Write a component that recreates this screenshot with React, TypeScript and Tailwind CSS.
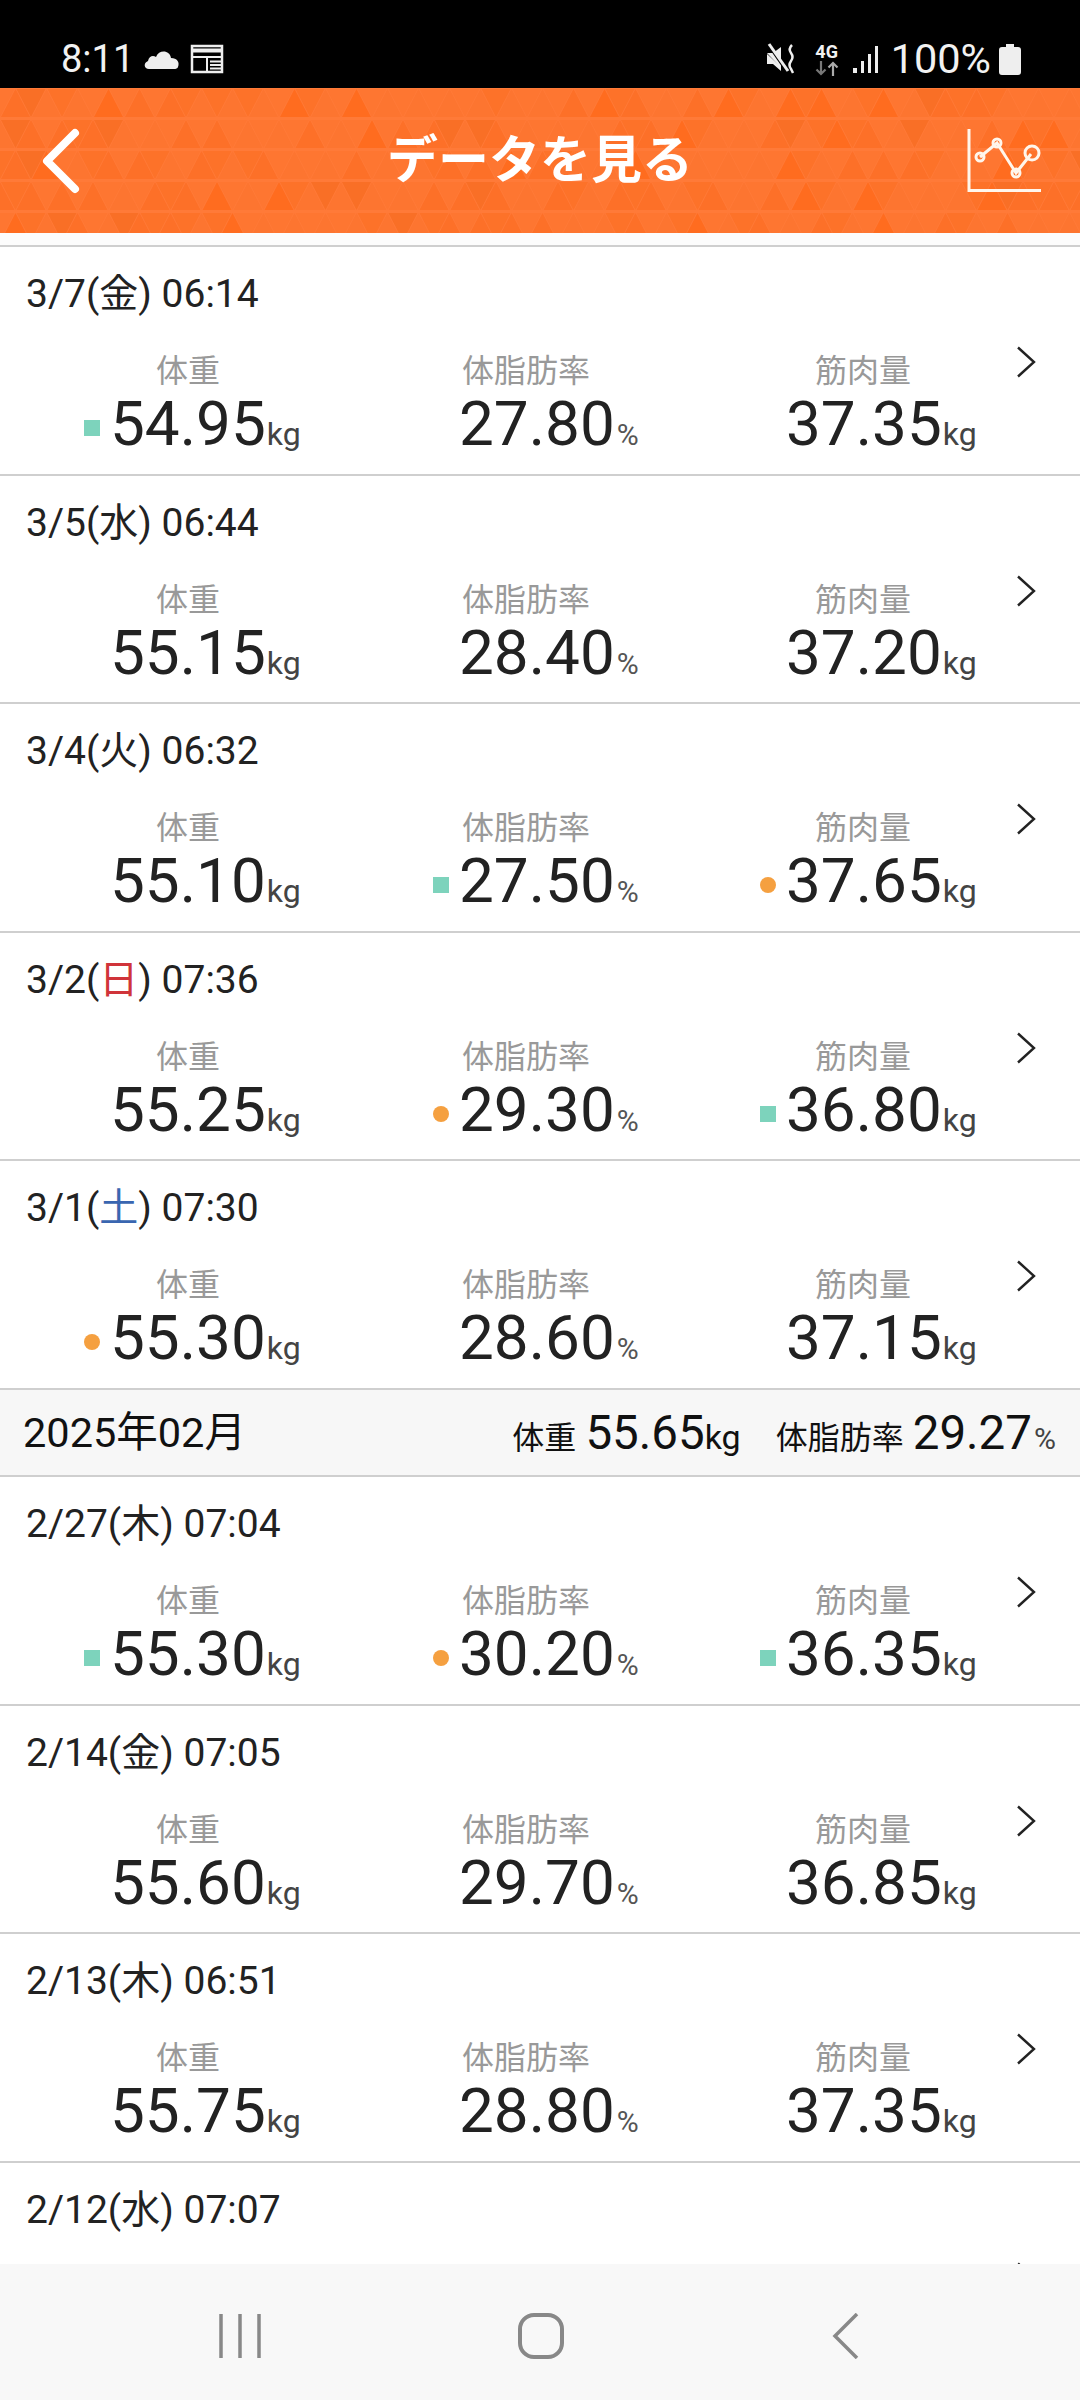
import { useMemo } from "react";

type Mark = "square" | "dot" | null;

type Entry = {
  date: string;
  day: string;
  time: string;
  weight?: string;
  fat?: string;
  muscle?: string;
  marks?: [Mark, Mark, Mark];
};

const marchRows: Entry[] = [
  { date: "3/7", day: "金", time: "06:14", weight: "54.95", fat: "27.80", muscle: "37.35", marks: ["square", null, null] },
  { date: "3/5", day: "水", time: "06:44", weight: "55.15", fat: "28.40", muscle: "37.20" },
  { date: "3/4", day: "火", time: "06:32", weight: "55.10", fat: "27.50", muscle: "37.65", marks: [null, "square", "dot"] },
  { date: "3/2", day: "日", time: "07:36", weight: "55.25", fat: "29.30", muscle: "36.80", marks: [null, "dot", "square"] },
  { date: "3/1", day: "土", time: "07:30", weight: "55.30", fat: "28.60", muscle: "37.15", marks: ["dot", null, null] },
];

// the last row runs under the nav bar, only its date is on screen
const febRows: Entry[] = [
  { date: "2/27", day: "木", time: "07:04", weight: "55.30", fat: "30.20", muscle: "36.35", marks: ["square", "dot", "square"] },
  { date: "2/14", day: "金", time: "07:05", weight: "55.60", fat: "29.70", muscle: "36.85" },
  { date: "2/13", day: "木", time: "06:51", weight: "55.75", fat: "28.80", muscle: "37.35" },
  { date: "2/12", day: "水", time: "07:07" },
];

function Marker({ kind }: { kind: Mark }) {
  if (kind === "square") return <span className="absolute left-[-26px] top-[27px] h-4 w-4 bg-[#7dd3bc]" />;
  if (kind === "dot") return <span className="absolute left-[-26px] top-[27px] h-4 w-4 rounded-full bg-[#f5a040]" />;
  return null;
}

function Row({ entry }: { entry: Entry }) {
  const marks = entry.marks ?? [null, null, null];
  const dayColor = entry.day === "日" ? "text-[#d0343a]" : entry.day === "土" ? "text-[#3a66b0]" : "";
  return (
    <div className="relative h-[228.6px] shrink-0 border-b-2 border-[#cfcfcf] bg-white">
      <div className="pl-[26px] pt-[25px] text-[39px] leading-[44px] text-[#222]">
        {entry.date}(<span className={dayColor}>{entry.day}</span>) {entry.time}
      </div>
      {entry.weight && entry.fat && entry.muscle && (
        <div className="mt-[35px] grid grid-cols-[349px_327px_1fr] pl-[110px]">
          <Cell label="体重" labelClass="ml-[46px]" value={entry.weight} unit="kg" mark={marks[0]} />
          <Cell label="体脂肪率" labelClass="ml-[3px]" value={entry.fat} unit="%" mark={marks[1]} />
          <Cell label="筋肉量" labelClass="ml-[29px]" value={entry.muscle} unit="kg" mark={marks[2]} />
        </div>
      )}
      <svg className="absolute right-[44px] top-[99px]" width="20" height="32" viewBox="0 0 20 32" fill="none">
        <path d="M2 1.5 L18 16 L2 30.5" stroke="#222" strokeWidth="2.4" />
      </svg>
    </div>
  );
}

function Cell({ label, labelClass, value, unit, mark }: { label: string; labelClass: string; value: string; unit: string; mark: Mark }) {
  return (
    <div>
      <div className={`text-[32px] leading-[40px] text-[#999] ${labelClass}`}>{label}</div>
      <div className="relative mt-[2px] flex items-baseline leading-[62px] text-[#222]">
        <Marker kind={mark} />
        <span className="text-[62px]">{value}</span>
        <span className={unit === "%" ? "ml-[2px] text-[30px] text-[#555]" : "ml-[1px] text-[32px] text-[#444]"}>{unit}</span>
      </div>
    </div>
  );
}

function MonthBar() {
  return (
    <div className="flex h-[87px] shrink-0 items-center justify-between border-b-2 border-[#cfcfcf] bg-[#f7f7f7] pl-[23px] pr-[24px] text-[#111]">
      <span className="mt-[2px] text-[41.500px]">2025年02月</span>
      <div className="mt-[2px] flex items-baseline">
        <span className="text-[32px]">体重</span>
        <span className="ml-[9px] text-[47.500px]">55.65</span>
        <span className="text-[34px]">kg</span>
        <span className="ml-[35px] text-[32px]">体脂肪率</span>
        <span className="ml-[9px] text-[47.500px]">29.27</span>
        <span className="ml-[2px] text-[30px] text-[#444]">%</span>
      </div>
    </div>
  );
}

// faint triangle texture of the app bar
function HeaderTexture() {
  const tris = useMemo(() => {
    const out: { d: string; fill: string }[] = [];
    let seed = 17;
    const next = () => {
      seed = (seed * 1103515245 + 12345) & 0x7fffffff;
      return seed / 0x7fffffff;
    };
    const w = 31;
    const h = 31;
    for (let r = 0; r < 5; r++) {
      const y = r * h - 1;
      for (let c = -1; c < 37; c++) {
        const x = c * w + (r % 2 ? w / 2 : 0);
        const n = next();
        const up = n < 0.18 ? "#ff6c1f" : n < 0.5 ? "#fd7028" : "#fd7530";
        out.push({ d: `M${x + 1} ${y + h - 1} L${x + w / 2} ${y + 2} L${x + w - 1} ${y + h - 1} Z`, fill: up });
        const m = next();
        const down = m < 0.1 ? "#f96f26" : m < 0.4 ? "#fd7229" : "#fe7631";
        out.push({ d: `M${x + w / 2 + 1} ${y + 2} L${x + w + w / 2 - 1} ${y + 2} L${x + w} ${y + h - 1} Z`, fill: down });
      }
    }
    return out;
  }, []);
  return (
    <svg className="absolute inset-0" width="1080" height="145" viewBox="0 0 1080 145">
      {tris.map((t, i) => (
        <path key={i} d={t.d} fill={t.fill} />
      ))}
    </svg>
  );
}

function StatusBar() {
  return (
    <div className="flex h-[88px] shrink-0 items-center bg-black pl-[61px] pr-[59px] pt-[30px] text-[#f2f2f2]">
      <span className="text-[38px] leading-none">8:11</span>
      <svg className="ml-[8px]" width="38" height="24" viewBox="0 0 38 24" fill="#eee">
        <path d="M7 22 C2 22 1 16 6 14 C7 9 11 8 14 10 C17 2 28 3 29 11 C35 11 38 15 36 20 C35.500 21.500 34 22 32 22 Z" />
      </svg>
      <svg className="ml-[10px]" width="34" height="30" viewBox="0 0 34 30" fill="none" stroke="#eee">
        <path d="M2 2 H32 V28 H2 Z" strokeWidth="2.500" />
        <path d="M2 6.500 H32" strokeWidth="4" />
        <path d="M2 13 H32 M17 13 V28" strokeWidth="2" />
        <path d="M20 17.500 H31 M20 21 H31 M20 24.500 H31" strokeWidth="1.800" />
      </svg>
      <div className="ml-auto flex items-center">
        <svg width="30" height="32" viewBox="0 0 30 32" fill="#eee">
          <path d="M1 10 H7 L15 4 V25 Z" />
          <path d="M1 11 V21 H7 L15 28 V24 Z" />
          <path d="M2 2 L20 28" stroke="#000" strokeWidth="2" />
          <path d="M3 1 L22 28" stroke="#eee" strokeWidth="3" />
          <path d="M26 2 Q22 6 25 10 Q28 14 25 18 Q22 22 25 26 L27 30" stroke="#eee" strokeWidth="2.500" fill="none" />
        </svg>
        <div className="ml-[18px] flex w-[26px] flex-col items-center">
          <span className="text-[18px] font-bold leading-[18px]">4G</span>
          <svg width="24" height="15" viewBox="0 0 24 15" fill="none" strokeWidth="2.200">
            <path d="M6 0 V13 M1.500 8.500 L6 13 L10.500 8.500" stroke="#777" />
            <path d="M18 15 V2 M13.500 6.500 L18 2 L22.500 6.500" stroke="#aaa" />
          </svg>
        </div>
        <svg className="ml-[13px]" width="28" height="30" viewBox="0 0 28 30" fill="#eee">
          <rect x="0" y="24" width="4" height="5" />
          <rect x="8" y="17" width="3" height="12" />
          <rect x="15" y="10" width="3" height="19" />
          <rect x="22" y="2" width="3" height="27" />
        </svg>
        <span className="ml-[10px] text-[41.500px] leading-none">100%</span>
        <svg className="ml-[8px]" width="22" height="31" viewBox="0 0 22 31" fill="#eee">
          <path d="M7 0 H15 V3 H19 Q22 3 22 6 V28 Q22 31 19 31 H3 Q0 31 0 28 V6 Q0 3 3 3 H7 Z" />
        </svg>
      </div>
    </div>
  );
}

function AppBar() {
  return (
    <div className="relative flex h-[145px] shrink-0 items-center justify-between overflow-hidden bg-[#ff7a38] pl-[42px] pr-[39px]">
      <HeaderTexture />
      <svg className="relative" width="38" height="66" viewBox="0 0 38 66" fill="none">
        <path d="M33 5 L5 33 L33 61" stroke="#fff" strokeWidth="8" strokeLinecap="round" strokeLinejoin="round" />
      </svg>
      <span className="absolute left-0 right-0 text-center text-[51px] font-bold leading-none text-white">データを見る</span>
      <svg className="relative" width="74" height="66" viewBox="0 0 74 66" fill="none" stroke="#fff6ec">
        <path d="M2 1 V62.500 H74" strokeWidth="3" />
        <path d="M13 29 L30 15 L49 45 L64 26" strokeWidth="3" />
        <circle cx="13" cy="29" r="4" strokeWidth="3" />
        <circle cx="30" cy="15" r="4" strokeWidth="3" />
        <circle cx="49" cy="45" r="4" strokeWidth="3" />
        <circle cx="65" cy="25" r="7" strokeWidth="3" />
      </svg>
    </div>
  );
}

function NavBar() {
  return (
    <div className="flex h-[136px] shrink-0 items-start bg-[#f8f8f8] pl-[219px] pt-[49px]">
      <svg width="42" height="46" viewBox="0 0 42 46" fill="none" stroke="#888" strokeWidth="3.500">
        <path d="M2 1 V45 M21 1 V45 M40 1 V45" />
      </svg>
      <svg className="ml-[257px]" width="46" height="46" viewBox="0 0 46 46" fill="none" stroke="#888" strokeWidth="4">
        <rect x="2" y="2" width="42" height="42" rx="14" />
      </svg>
      <svg className="ml-[268px]" width="28" height="46" viewBox="0 0 28 46" fill="none" stroke="#888" strokeWidth="3.500">
        <path d="M25 1 L3 23 L25 45" />
      </svg>
    </div>
  );
}

export default function App() {
  return (
    <div className="flex h-[2400px] w-[1080px] flex-col overflow-hidden bg-white font-['Roboto','Noto_Sans_CJK_JP',sans-serif]">
      <StatusBar />
      <AppBar />
      <div className="h-[14px] shrink-0 border-b-2 border-[#cfcfcf] bg-[#fcfcfc]" />
      <div className="flex min-h-0 flex-1 flex-col overflow-hidden">
        {marchRows.map((entry) => (
          <Row key={entry.date} entry={entry} />
        ))}
        <MonthBar />
        {febRows.map((entry) => (
          <Row key={entry.date} entry={entry} />
        ))}
      </div>
      <NavBar />
    </div>
  );
}
